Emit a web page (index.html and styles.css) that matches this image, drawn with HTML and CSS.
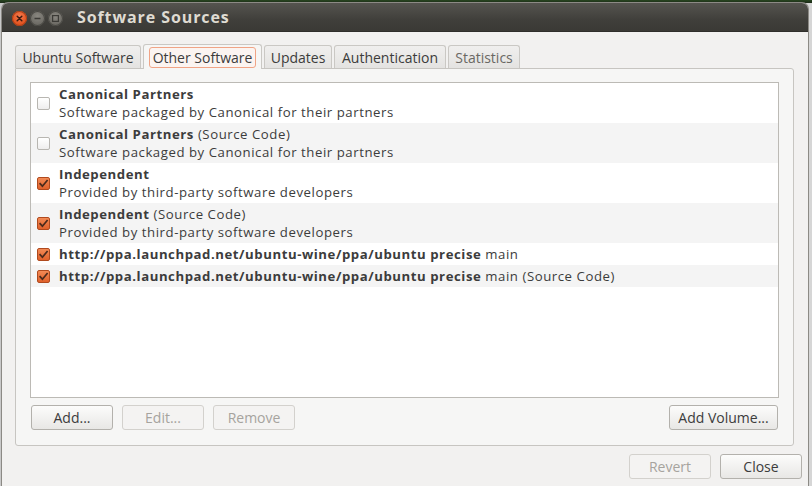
FILE: index.html
```html
<!DOCTYPE html>
<html>
<head>
<meta charset="utf-8">
<link rel="stylesheet" href="styles.css">
</head>
<body>
<div class="desktop">
  <div class="window">
    <div class="titlebar">
      <div class="wbtns">
        <span class="wbtn close"><svg width="15" height="15" viewBox="0 0 15 15"><path d="M5.2 5.2 L9.8 9.8 M9.8 5.2 L5.2 9.8" stroke="#3a1a10" stroke-width="1.5" stroke-linecap="round"/></svg></span>
        <span class="wbtn"><svg width="15" height="15" viewBox="0 0 15 15"><path d="M4.5 7.5 H10.5" stroke="#3c3b37" stroke-width="1.5"/></svg></span>
        <span class="wbtn"><svg width="15" height="15" viewBox="0 0 15 15"><rect x="4.6" y="4.6" width="5.8" height="5.8" fill="none" stroke="#3c3b37" stroke-width="1.2"/></svg></span>
      </div>
      <div class="wtitle">Software Sources</div>
    </div>
    <div class="content">
      <div class="tabs">
        <div class="tab t1">Ubuntu Software</div>
        <div class="tab active t2"><span class="focus">Other Software</span></div>
        <div class="tab t3">Updates</div>
        <div class="tab t4">Authentication</div>
        <div class="tab dim t5">Statistics</div>
      </div>
      <div class="page">
        <div class="list">
          <div class="row two">
            <span class="cb"></span>
            <div class="txt"><div><b>Canonical Partners</b></div><div>Software packaged by Canonical for their partners</div></div>
          </div>
          <div class="row two alt">
            <span class="cb"></span>
            <div class="txt"><div><b>Canonical Partners</b> (Source Code)</div><div>Software packaged by Canonical for their partners</div></div>
          </div>
          <div class="row two">
            <span class="cb on"><svg width="13" height="13" viewBox="0 0 13 13"><path d="M2.6 6.2 L5.4 9.2 L10.6 3" fill="none" stroke="#4a2a1c" stroke-width="1.7"/></svg></span>
            <div class="txt"><div><b>Independent</b></div><div>Provided by third-party software developers</div></div>
          </div>
          <div class="row two alt">
            <span class="cb on"><svg width="13" height="13" viewBox="0 0 13 13"><path d="M2.6 6.2 L5.4 9.2 L10.6 3" fill="none" stroke="#4a2a1c" stroke-width="1.7"/></svg></span>
            <div class="txt"><div><b>Independent</b> (Source Code)</div><div>Provided by third-party software developers</div></div>
          </div>
          <div class="row one">
            <span class="cb on"><svg width="13" height="13" viewBox="0 0 13 13"><path d="M2.6 6.2 L5.4 9.2 L10.6 3" fill="none" stroke="#4a2a1c" stroke-width="1.7"/></svg></span>
            <div class="txt"><div><b>http://ppa.launchpad.net/ubuntu-wine/ppa/ubuntu precise</b> main</div></div>
          </div>
          <div class="row one alt">
            <span class="cb on"><svg width="13" height="13" viewBox="0 0 13 13"><path d="M2.6 6.2 L5.4 9.2 L10.6 3" fill="none" stroke="#4a2a1c" stroke-width="1.7"/></svg></span>
            <div class="txt"><div><b>http://ppa.launchpad.net/ubuntu-wine/ppa/ubuntu precise</b> main (Source Code)</div></div>
          </div>
        </div>
        <div class="btnrow">
          <button class="btn">Add...</button>
          <button class="btn disabled">Edit...</button>
          <button class="btn disabled">Remove</button>
          <span class="spacer"></span>
          <button class="btn wide">Add Volume...</button>
        </div>
      </div>
      <div class="actions">
        <button class="btn disabled">Revert</button>
        <button class="btn">Close</button>
      </div>
    </div>
  </div>
</div>
</body>
</html>
```

FILE: styles.css
```css
html, body {
  margin: 0;
  padding: 0;
}
body {
  width: 812px;
  height: 486px;
  overflow: hidden;
  background: linear-gradient(90deg, #c9c9c9 0, #d6d6d6 100%);
  font-family: "Open Sans", "DejaVu Sans", sans-serif;
  font-size: 13px;
  color: #3c3c3c;
}
.desktop {
  padding: 3px 4px 0 2px;
  background: linear-gradient(180deg, #27451f 0, #1c2a18 3px, transparent 3px);
  height: 483px;
}
.window {
  width: 806px;
  height: 483px;
  background: #f2f1f0;
  border-radius: 6px 6px 0 0;
  box-shadow: 0 0 0 1px #8c8a85;
  overflow: hidden;
}
.titlebar {
  height: 28px;
  background: linear-gradient(180deg, #55544f 0, #403f3b 60%, #3a3935 100%);
  display: flex;
  align-items: center;
  border-bottom: 1px solid #2f2e2b;
}
.wbtns {
  display: flex;
  gap: 3px;
  padding-left: 10px;
  padding-top: 2px;
}
.wbtn {
  width: 15px;
  height: 15px;
  border-radius: 50%;
  background: radial-gradient(circle at 50% 35%, #8a8881 0, #6a6862 70%, #5c5a55 100%);
  box-shadow: inset 0 0 0 1px #4a4944;
  display: block;
}
.wbtn svg { display: block; }
.wbtn.close {
  background: radial-gradient(circle at 50% 35%, #f47a4f 0, #e2531f 65%, #c8461a 100%);
  box-shadow: inset 0 0 0 1px #a9401a;
}
.wtitle {
  margin-left: 14px;
  color: #dfdbd2;
  font-weight: bold;
  font-size: 16px;
  letter-spacing: 0.9px;
}
.content {
  padding: 12px 0 0 13px;
}
.tabs {
  display: flex;
  gap: 2px;
  height: 24px;
  align-items: flex-end;
}
.tab {
  height: 23px;
  box-sizing: border-box;
  border: 1px solid #cac8c4;
  border-bottom: none;
  border-radius: 3px 3px 0 0;
  background: linear-gradient(180deg, #f0efee 0, #e4e3e1 100%);
  display: flex;
  align-items: center;
  justify-content: center;
  font-size: 14px;
  color: #3c3c3c;
}
.t1 { width: 126px; }
.t2 { width: 119px; }
.t3 { width: 68px; }
.t4 { width: 112px; }
.t5 { width: 72px; }
.tab.active {
  height: 25px;
  background: #f6f6f5;
  position: relative;
  top: 1px;
}
.tab.active .focus {
  border: 1px solid #f0a486;
  border-radius: 3px;
  background: #fbf4f1;
  padding: 0 3px;
  line-height: 19px;
}
.tab.dim { color: #6a6864; }
.page {
  width: 779px;
  height: 378px;
  box-sizing: border-box;
  border: 1px solid #c7c5c1;
  border-radius: 0 3px 3px 3px;
  background: #f6f6f5;
  padding: 13px 14px 0 14px;
}
.list {
  height: 316px;
  box-sizing: border-box;
  border: 1px solid #bcbab5;
  background: #ffffff;
}
.row {
  display: flex;
  align-items: center;
  padding-left: 6px;
  box-sizing: border-box;
}
.row.two { height: 40px; }
.row.one { height: 22px; }
.row.alt { background: #f4f4f4; }
.txt {
  margin-left: 9px;
  line-height: 18px;
  font-size: 13.2px;
  letter-spacing: 0.55px;
  color: #3c3c3c;
}
.txt b { font-weight: bold; }
.cb {
  width: 13px;
  height: 13px;
  box-sizing: border-box;
  border: 1px solid #b8b6b1;
  border-radius: 2px;
  background: linear-gradient(180deg, #ffffff 0, #efeeed 100%);
  display: block;
  flex: none;
}
.cb svg { display: block; margin: -1px; }
.cb.on {
  border-color: #b04a1e;
  background: linear-gradient(180deg, #f28a55 0, #e0612b 100%);
}
.btnrow {
  display: flex;
  gap: 9px;
  margin-top: 7px;
  padding-left: 1px;
  padding-right: 1px;
}
.spacer { flex: 1; }
.btn {
  width: 82px;
  height: 25px;
  box-sizing: border-box;
  border: 1px solid #b3b1ac;
  border-radius: 3px;
  background: linear-gradient(180deg, #fcfcfb 0, #e8e7e5 100%);
  font-family: "Open Sans", "DejaVu Sans", sans-serif;
  font-size: 14px;
  color: #3c3c3c;
  padding: 0;
  margin: 0;
}
.btn.wide { width: 109px; }
.btn.disabled {
  border-color: #d3d1cd;
  background: #f4f3f2;
  color: #a6a39e;
}
.actions {
  display: flex;
  justify-content: flex-end;
  gap: 9px;
  margin-top: 8px;
  padding-right: 6px;
}
```
